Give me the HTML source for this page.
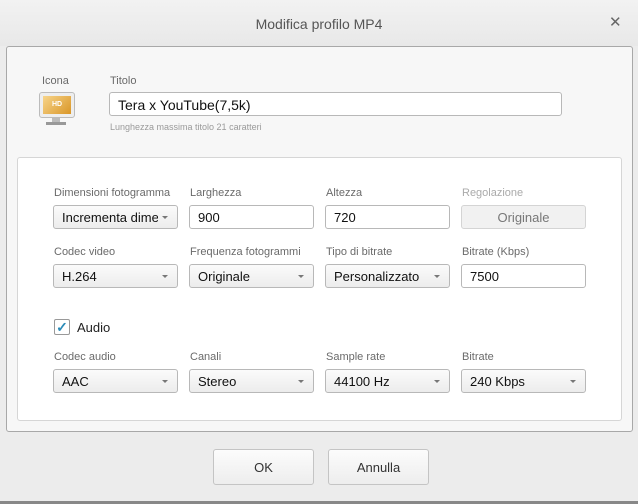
<!DOCTYPE html><html><head><style>
body{margin:0;width:638px;height:504px;background:#ececec;font-family:"Liberation Sans",sans-serif;position:relative;overflow:hidden}
.a{position:absolute}
.t{position:absolute;font-size:11px;color:#6a6a6a}
.f{position:absolute;height:22px;border:1px solid #b8b8b8;border-radius:3px;background:#fff;font-size:13px;color:#111;line-height:24px;padding-left:8px;box-sizing:content-box;width:115px;overflow:hidden;white-space:nowrap}
.s{background:linear-gradient(#fbfbfb,#ececec)}
.s:after{content:"";position:absolute;right:9px;top:10px;border:3px solid transparent;border-top:3px solid #777}
.b{position:absolute;height:34px;width:99px;border:1px solid #c4c4c4;border-radius:3px;background:linear-gradient(#fcfcfc,#ededed);font-size:13px;color:#333;text-align:center;line-height:36px;top:449px}
</style></head><body>
<div class="a" style="left:0;top:0;width:638px;height:46px;background:linear-gradient(#f2f2f2,#e8e8e8)"></div>
<div class="a" style="left:0;top:16px;width:638px;text-align:center;font-size:14px;color:#555">Modifica profilo MP4</div>
<div class="a" style="left:609px;top:13px;font-size:15px;color:#666">✕</div>
<div class="a" style="left:6px;top:46px;width:625px;height:384px;border:1px solid #a8a8a8;border-radius:3px;background:#f7f7f7"></div>
<div class="t" style="left:42px;top:75px">Icona</div>
<div class="t" style="left:110px;top:75px">Titolo</div>
<div class="a" style="left:39px;top:92px;width:34px;height:24px;border:1px solid #bbb;border-radius:3px;background:#eee"><div style="margin:3px;height:18px;background:linear-gradient(135deg,#f7d48a,#d99628);color:#fff;font-size:7px;font-weight:bold;text-align:center;line-height:18px">HD</div></div>
<div class="a" style="left:52px;top:118px;width:8px;height:4px;background:#bbb"></div>
<div class="a" style="left:46px;top:122px;width:20px;height:3px;background:#999"></div>
<div class="f" style="left:109px;top:92px;width:443px;font-size:14px">Tera x YouTube(7,5k)</div>
<div class="t" style="left:110px;top:122px;font-size:9px;color:#9a9a9a">Lunghezza massima titolo 21 caratteri</div>
<div class="a" style="left:17px;top:157px;width:603px;height:262px;border:1px solid #d6d6d6;border-radius:3px;background:#fff"></div>
<div class="t" style="left:54px;top:187px">Dimensioni fotogramma</div>
<div class="t" style="left:190px;top:187px">Larghezza</div>
<div class="t" style="left:326px;top:187px">Altezza</div>
<div class="t" style="left:462px;top:187px;color:#aaa">Regolazione</div>
<div class="f s" style="left:53px;top:205px"><span style="display:inline-block;width:96px;overflow:hidden">Incrementa dimensioni</span></div>
<div class="f" style="left:189px;top:205px">900</div>
<div class="f" style="left:325px;top:205px">720</div>
<div class="f" style="left:461px;top:205px;background:#f1f1f1;border-color:#d4d4d4;color:#777;text-align:center;padding:0;width:123px">Originale</div>
<div class="t" style="left:54px;top:246px">Codec video</div>
<div class="t" style="left:190px;top:246px">Frequenza fotogrammi</div>
<div class="t" style="left:326px;top:246px">Tipo di bitrate</div>
<div class="t" style="left:462px;top:246px">Bitrate (Kbps)</div>
<div class="f s" style="left:53px;top:264px">H.264</div>
<div class="f s" style="left:189px;top:264px">Originale</div>
<div class="f s" style="left:325px;top:264px">Personalizzato</div>
<div class="f" style="left:461px;top:264px">7500</div>
<div class="a" style="left:54px;top:319px;width:14px;height:14px;border:1px solid #999;border-radius:2px;background:#fff;color:#2a8bb8;font-size:14px;line-height:14px;text-align:center;font-weight:bold">✓</div>
<div class="a" style="left:77px;top:320px;font-size:13px;color:#222">Audio</div>
<div class="t" style="left:54px;top:351px">Codec audio</div>
<div class="t" style="left:190px;top:351px">Canali</div>
<div class="t" style="left:326px;top:351px">Sample rate</div>
<div class="t" style="left:462px;top:351px">Bitrate</div>
<div class="f s" style="left:53px;top:369px">AAC</div>
<div class="f s" style="left:189px;top:369px">Stereo</div>
<div class="f s" style="left:325px;top:369px">44100 Hz</div>
<div class="f s" style="left:461px;top:369px">240 Kbps</div>
<div class="b" style="left:213px">OK</div>
<div class="b" style="left:328px">Annulla</div>
<div class="a" style="left:0;top:501px;width:638px;height:3px;background:#888"></div>
</body></html>
